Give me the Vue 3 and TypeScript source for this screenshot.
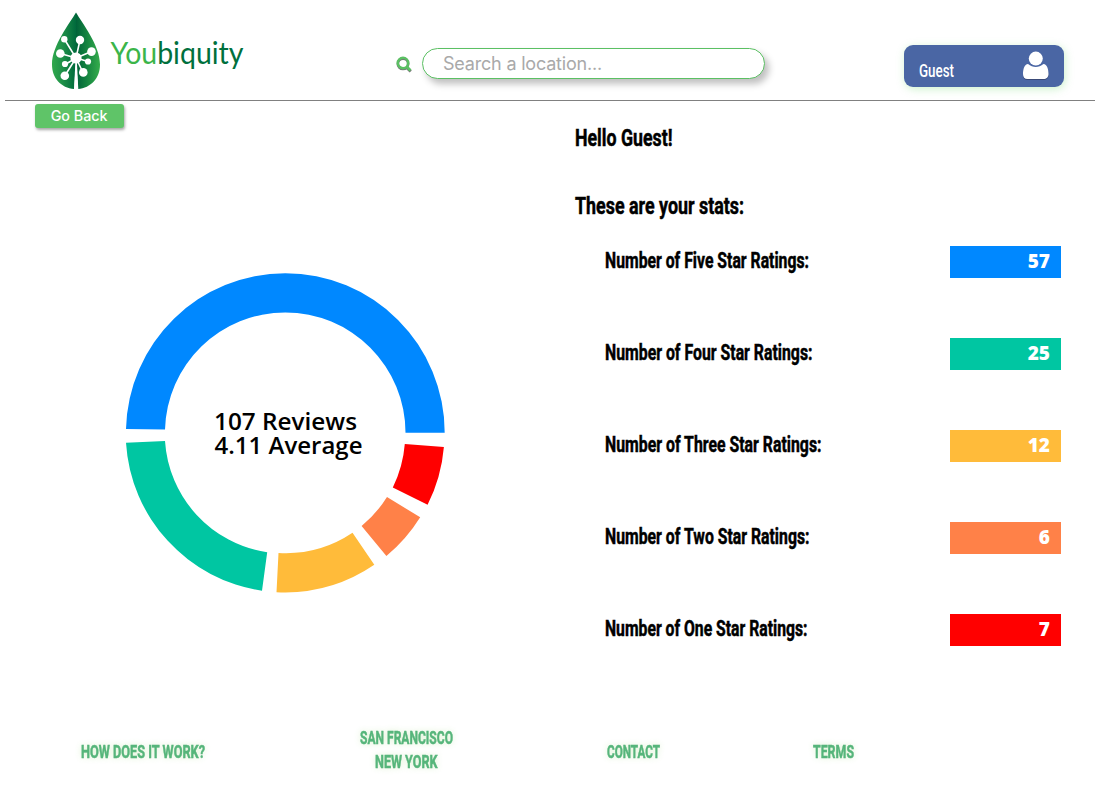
<script setup lang="ts">
import { h, ref } from 'vue'

interface Rating {
  label: string
  labelWidth: number
  count: number
  color: string
  arc: string
}

// Text fitted to a fixed width, giving a condensed face.
const FitText = (props: { text: string; width: number; size: number }) =>
  h(
    'svg',
    { class: 'fit', width: props.width, height: props.size * 1.25 },
    [
      h(
        'text',
        {
          x: 0,
          y: props.size,
          'font-size': props.size,
          textLength: props.width,
          lengthAdjust: 'spacingAndGlyphs',
          fill: 'currentColor',
        },
        props.text,
      ),
    ],
  )
FitText.props = ['text', 'width', 'size']

const query = ref('')

const ratings: Rating[] = [
  {
    label: 'Number of Five Star Ratings:',
    labelWidth: 204,
    count: 57,
    color: '#0088ff',
    arc: 'M126 429A159.5 159.5 0 0 1 285.3 273.2A159.5 159.5 0 0 1 444.7 432.7L405.5 432.7A120.3 120.3 0 0 0 285.3 312.4A120.3 120.3 0 0 0 165 429.5Z',
  },
  {
    label: 'Number of Four Star Ratings:',
    labelWidth: 207.5,
    count: 25,
    color: '#00c6a2',
    arc: 'M126 442.8A159.5 159.5 0 0 0 262 590.7L267.2 552.3A120.3 120.3 0 0 1 165 441Z',
  },
  {
    label: 'Number of Three Star Ratings:',
    labelWidth: 216.5,
    count: 12,
    color: '#ffbb3a',
    arc: 'M276.5 592.2A159.5 159.5 0 0 0 374.3 564.8L352.5 532.8A120.3 120.3 0 0 1 278.5 553Z',
  },
  {
    label: 'Number of Two Star Ratings:',
    labelWidth: 204.5,
    count: 6,
    color: '#ff8148',
    arc: 'M386.4 556A159.5 159.5 0 0 0 420.2 517.3L387 497A120.3 120.3 0 0 1 361.6 526Z',
  },
  {
    label: 'Number of One Star Ratings:',
    labelWidth: 202.5,
    count: 7,
    color: '#ff0000',
    arc: 'M427.6 504.8A159.5 159.5 0 0 0 443.9 447L404.8 444A120.3 120.3 0 0 1 392.8 487.5Z',
  },
]
</script>

<template>
  <div class="page">
    <header class="header">
      <svg class="logo" width="210" height="84" viewBox="45 8 210 84">
        <defs>
          <linearGradient id="leafLeft" x1="0" x2="1">
            <stop offset="0" stop-color="#2fa84c" />
            <stop offset="0.35" stop-color="#23964a" />
            <stop offset="1" stop-color="#006a3c" />
          </linearGradient>
          <linearGradient id="leafRight" x1="0" x2="1">
            <stop offset="0" stop-color="#006239" />
            <stop offset="0.4" stop-color="#12803f" />
            <stop offset="1" stop-color="#35ad4c" />
          </linearGradient>
        </defs>
        <path d="M76 12.5C70 23 52 45 52 64.500C52 78 61 88 74.200 89L76 60Z" fill="url(#leafLeft)" />
        <path d="M76 12.500C82 23 100 45 100 64.500C100 78 91 88 78 89L76 60Z" fill="url(#leafRight)" />
        <g stroke="#fff" stroke-width="1.600" fill="#fff">
          <path d="M76 58L64.300 39M76 58L80 40M76 58L91.500 51.500M76 58L60.300 53.500M76 58L66 64M76 58L88 61.500M76 58L65 75.500M76 58L83 72.500" />
          <path d="M75.500 60L74 89.500H78.300L76.800 60Z" stroke="none" />
          <g stroke="none">
            <circle cx="76" cy="58" r="5.600" />
            <circle cx="64.300" cy="39.200" r="3.200" />
            <circle cx="80" cy="40" r="4.200" />
            <circle cx="91.500" cy="51.600" r="4.300" />
            <circle cx="60.300" cy="53.500" r="4.300" />
            <circle cx="65" cy="64" r="3.100" />
            <circle cx="88" cy="61.500" r="3.100" />
            <circle cx="64.800" cy="75.700" r="4.300" />
            <circle cx="83.300" cy="72.400" r="4.300" />
          </g>
        </g>
        <text class="wordmark" x="110.500" y="63.800" textLength="133" lengthAdjust="spacingAndGlyphs"><tspan class="wordmark-light">You</tspan><tspan class="wordmark-dark">biquity</tspan></text>
      </svg>

      <div class="search">
        <svg class="search-icon" width="17" height="18" viewBox="0 0 17 18" fill="none">
          <g stroke="#777" transform="translate(0 .8)">
            <circle cx="7" cy="7" r="5.200" stroke-width="2.600" />
            <path d="M10.800 10.800L14.700 14.700" stroke-width="3" />
          </g>
          <g stroke="#5bc063">
            <circle cx="7" cy="7" r="5.200" stroke-width="2.600" />
            <path d="M10.800 10.800L14.500 14.500" stroke-width="2.800" />
          </g>
        </svg>
        <input v-model="query" class="search-input" type="text" placeholder="Search a location..." />
      </div>

      <div class="account">
        <FitText class="account-name" text="Guest" :width="35" :size="18" />
        <svg class="account-icon" width="28" height="30" viewBox="0 0 28 30">
          <path d="M6 13.500C2.500 14 1 18 1 23C1 26 2.500 28 5.500 28H21.500C24.500 28 26.500 26 26.500 23C26.500 18 25 14 21.500 13.500C16.500 17 11 17 6 13.500Z" fill="#3a4a78" transform="translate(0 .9)" />
          <path d="M6 13C2.500 13.500 1 18 1 23C1 26 2.500 28 5.500 28H21.500C24.500 28 26.500 26 26.500 23C26.500 18 25 13.500 21.500 13C16.500 17 11 17 6 13Z" fill="#fff" />
          <circle cx="13.800" cy="7.600" r="7" fill="#fff" />
        </svg>
      </div>
    </header>

    <main class="main">
      <section class="overview">
        <button class="back" type="button">Go Back</button>
        <svg class="chart" width="330" height="330" viewBox="120 268 330 330">
          <path v-for="r in ratings" :key="r.label" :d="r.arc" :fill="r.color" />
          <text x="214" y="429.700" textLength="143" lengthAdjust="spacingAndGlyphs">107 Reviews</text>
          <text x="214.500" y="453.700" textLength="148" lengthAdjust="spacingAndGlyphs">4.11 Average</text>
        </svg>
      </section>

      <section class="stats">
        <FitText class="greeting" text="Hello Guest!" :width="97.5" :size="24.5" />
        <FitText class="intro" text="These are your stats:" :width="169" :size="24.5" />
        <ul class="ratings">
          <li v-for="r in ratings" :key="r.label" class="rating">
            <FitText class="rating-label" :text="r.label" :width="r.labelWidth" :size="21.5" />
            <span class="rating-count" :style="{ backgroundColor: r.color }">{{ r.count }}</span>
          </li>
        </ul>
      </section>
    </main>

    <footer class="footer">
      <FitText text="HOW DOES IT WORK?" :width="124" :size="19" />
      <div class="cities">
        <FitText text="SAN FRANCISCO" :width="93" :size="19" />
        <FitText text="NEW YORK" :width="62.5" :size="19" />
      </div>
      <FitText text="CONTACT" :width="53" :size="19" />
      <FitText text="TERMS" :width="41" :size="19" />
    </footer>
  </div>
</template>

<style>
body {
  margin: 0;
  background: #fff;
}
</style>

<style scoped>
.page {
  width: 1103px;
  height: 792px;
  overflow: hidden;
  color: #000;
  font-family: Roboto, 'Liberation Sans', sans-serif;
}
.fit {
  display: block;
  flex: none;
  overflow: visible;
  font-weight: 700;
  stroke: currentColor;
  stroke-width: 0.5px;
}
.header {
  display: flex;
  align-items: flex-start;
  box-sizing: border-box;
  height: 101px;
  margin: 0 8px 0 5px;
  border-bottom: 1px solid #808080;
}
.logo {
  flex: none;
  margin: 8px 0 0 40px;
}
.wordmark {
  font: 400 31px Lato, sans-serif;
}
.wordmark-light {
  fill: #3bb54a;
}
.wordmark-dark {
  fill: #00703d;
}
.search {
  display: flex;
  align-items: center;
  margin: 48px 0 0 141px;
}
.search-icon {
  margin: 3px 9px 0 0;
}
.search-input {
  box-sizing: border-box;
  width: 343px;
  height: 31px;
  padding: 0 20px;
  border: 1px solid #5bc063;
  border-radius: 16px;
  outline: none;
  background: #fff;
  box-shadow: 4px 5px 7px rgba(0, 0, 0, 0.25);
  font: 400 18px Inter, sans-serif;
  letter-spacing: -0.2px;
}
.search-input::placeholder {
  color: #a9a9a9;
  opacity: 1;
}
.account {
  display: flex;
  justify-content: space-between;
  box-sizing: border-box;
  width: 160px;
  height: 42px;
  margin: 45px 0 0 139px;
  padding: 0 14px 0 14.500px;
  border-radius: 9px;
  background: #4a66a4;
  box-shadow: 1px 2px 9px rgba(120, 220, 120, 0.38);
  color: #fff;
}
.account-name {
  margin-top: 14px;
  font-weight: 500;
  stroke-width: 0;
}
.account-icon {
  margin-top: 6px;
}
.main {
  display: flex;
  height: 619px;
}
.overview {
  width: 574.500px;
}
.back {
  display: block;
  width: 89px;
  height: 24px;
  margin: 2.600px 0 0 34.600px;
  padding: 0;
  border: 0;
  border-radius: 3px;
  background: #5fc468;
  box-shadow: 1px 2px 3px rgba(0, 0, 0, 0.35);
  color: #fff;
  font: 500 14.300px/23px Inter, sans-serif;
}
.chart {
  display: block;
  margin: 140.400px 0 0 120px;
  font: 600 23px 'Open Sans', sans-serif;
}
.stats {
  width: 486.500px;
}
.greeting {
  margin-top: 20px;
}
.intro {
  margin-top: 37.400px;
}
.ratings {
  display: flex;
  flex-direction: column;
  gap: 60px;
  margin: 26.300px 0 0;
  padding: 0 0 0 30px;
  list-style: none;
}
.rating {
  display: flex;
  justify-content: space-between;
  height: 32px;
}
.rating-label {
  margin-top: 0.500px;
}
.rating-count {
  box-sizing: border-box;
  width: 111px;
  height: 32px;
  padding-right: 11px;
  color: #fff;
  font: 800 19px/31px 'Open Sans', sans-serif;
  text-align: right;
}
.footer {
  display: flex;
  align-items: center;
  height: 61px;
  padding-left: 81px;
  color: #56b57b;
  filter: drop-shadow(0 0 3px rgba(180, 225, 150, 0.45));
}
.cities {
  display: flex;
  flex-direction: column;
  align-items: center;
  margin: -3px 154px 0 154.500px;
}
.footer > :last-child {
  margin-left: 153.500px;
}
</style>
